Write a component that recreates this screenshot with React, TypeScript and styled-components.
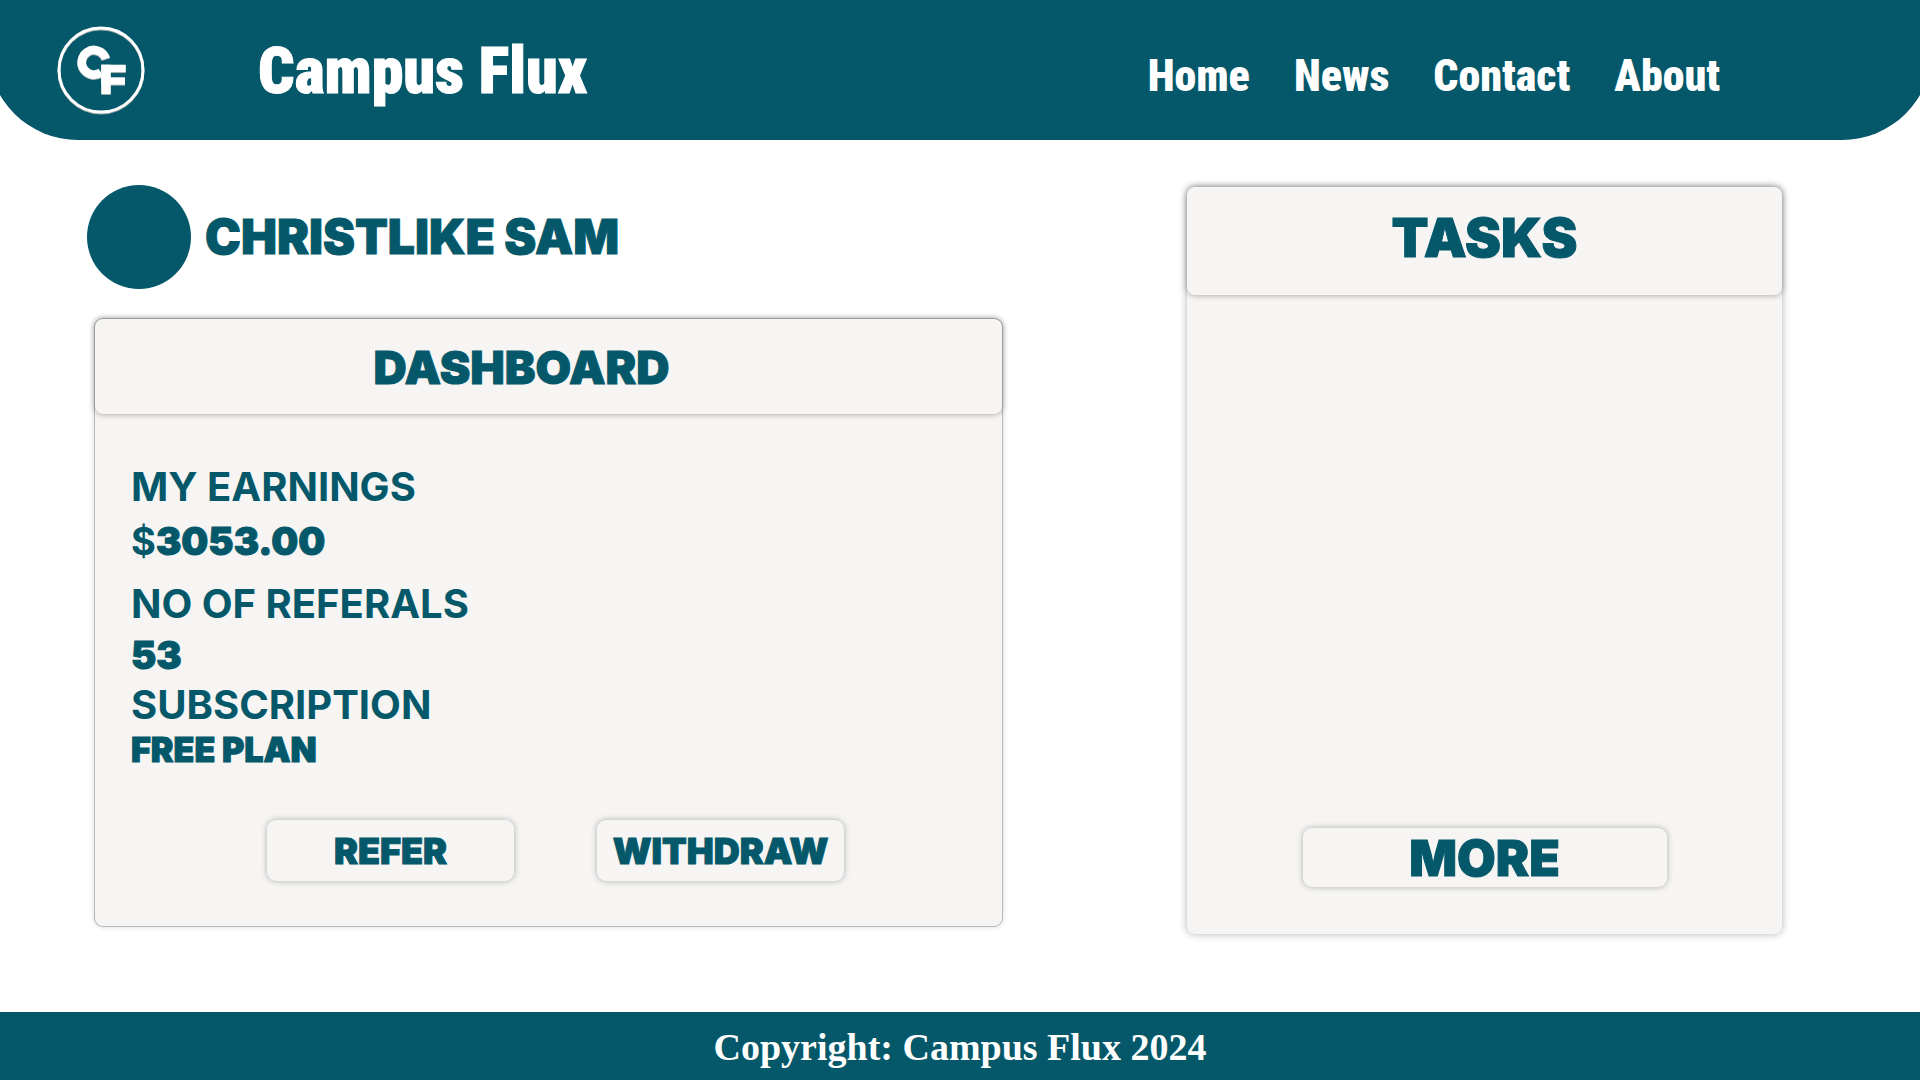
import React from "react";
import styled, { createGlobalStyle } from "styled-components";

const teal = "#045869";
const panel = "#f6f5f4";
const display = `Inter, "Open Sans", sans-serif`;
const condensed = `"Roboto Condensed", "Liberation Sans Narrow", Roboto, sans-serif`;

const GlobalStyle = createGlobalStyle`
  * { box-sizing: border-box; }
  body {
    margin: 0;
    background: #fff;
    color: ${teal};
    font-family: ${display};
    overflow-x: hidden;
  }
  h1, h2, dl, dd, p { margin: 0; }
`;

const Page = styled.div`
  min-height: 100vh;
  display: flex;
  flex-direction: column;
`;

const Header = styled.header`
  display: flex;
  align-items: center;
  height: 140px;
  margin: 0 -12px;
  padding: 0 212px 0 68px;
  background: ${teal};
  color: #fff;
  border-radius: 0 0 90px 90px;
  font-family: ${condensed};
  font-weight: 900;
`;

const Logo = styled.svg`
  width: 90px;
  height: 90px;
  flex: none;
  filter: drop-shadow(0 1px 0 #9aa8a6);
`;

const Brand = styled.a`
  margin-left: 112px;
  padding-top: 4px;
  font-size: 64px;
  line-height: 76px;
  color: inherit;
  text-decoration: none;
  -webkit-text-stroke: 1px currentColor;
`;

const Nav = styled.nav`
  display: flex;
  gap: 44px;
  margin-left: auto;
  padding-top: 12px;
`;

const NavLink = styled.a`
  font-size: 44px;
  line-height: 52px;
  color: inherit;
  text-decoration: none;
`;

const Main = styled.main`
  flex: 1;
  display: grid;
  grid-template-columns: minmax(0, 915fr) minmax(0, 595fr);
  gap: 185px;
  align-items: start;
  padding: 45px 138px 78px 87px;
`;

const Profile = styled.div`
  display: flex;
  align-items: center;
  gap: 14px;
  margin-bottom: 30px;
`;

const Avatar = styled.div`
  width: 104px;
  height: 104px;
  border-radius: 50%;
  background: ${teal};
`;

const Name = styled.h1`
  font-size: 48px;
  line-height: 52px;
  font-weight: 900;
  -webkit-text-stroke: 1px currentColor;
`;

const Card = styled.section<{ $outlined?: boolean }>`
  display: flex;
  flex-direction: column;
  background: ${panel};
  border-radius: 8px;
  ${(p) =>
    p.$outlined
      ? "margin-left: 8px; box-shadow: 0 0 0 1px #b9b9b9, 0 0 6px rgba(0, 0, 0, 0.2);"
      : "margin-top: 2px; box-shadow: 0 0 8px rgba(0, 0, 0, 0.3);"}
`;

const CardHead = styled.div<{ $tall?: boolean }>`
  display: flex;
  align-items: center;
  justify-content: center;
  height: ${(p) => (p.$tall ? 108 : 95)}px;
  padding: ${(p) => (p.$tall ? "0 0 6px" : "0 54px 0 0")};
  border-radius: 8px;
  box-shadow: 0 0 6px rgba(0, 0, 0, 0.38);
`;

const Title = styled.h2<{ $large?: boolean }>`
  font-size: ${(p) => (p.$large ? 54 : 46)}px;
  line-height: 60px;
  font-weight: 900;
  -webkit-text-stroke: 1px currentColor;
`;

const Stats = styled.dl`
  padding: 48px 36px 0;
`;

const Stat = styled.div<{ $spaced?: boolean }>`
  display: flex;
  flex-direction: column;
  gap: ${(p) => (p.$spaced ? 4 : 1)}px;
  padding-bottom: ${(p) => (p.$spaced ? 13 : 0)}px;
`;

const Label = styled.dt`
  font-size: 40px;
  line-height: 50px;
  font-weight: 700;
`;

const Value = styled.dd<{ $small?: boolean }>`
  font-size: ${(p) => (p.$small ? 34 : 38)}px;
  line-height: ${(p) => (p.$small ? 38 : 50)}px;
  font-weight: 900;
  -webkit-text-stroke: 1px currentColor;
`;

const Sign = styled.span`
  font-weight: 700;
  -webkit-text-stroke: 0;
`;

const Actions = styled.div`
  display: flex;
  justify-content: center;
  gap: 83px;
  padding: 51px 0 45px 14px;
`;

const Button = styled.button<{ $wide?: boolean }>`
  width: ${(p) => (p.$wide ? 364 : 247)}px;
  height: ${(p) => (p.$wide ? 59 : 61)}px;
  padding: 0;
  border: 0;
  border-radius: 9px;
  background: ${panel};
  box-shadow: 0 0 6px rgba(0, 0, 0, 0.3);
  color: ${teal};
  font: 900 ${(p) => (p.$wide ? 50 : 36)}px ${display};
  -webkit-text-stroke: 1px currentColor;
`;

const TaskArea = styled.div`
  height: 533px;
`;

const TaskFoot = styled.div`
  display: flex;
  justify-content: center;
  padding-bottom: 47px;
`;

const Footer = styled.footer`
  padding: 11px 0 9px;
  background: ${teal};
  color: #fff;
  text-align: center;
  font: 700 38px/48px "Palatino Linotype", Palatino, "Liberation Serif", serif;
`;

export default function App() {
  return (
    <Page>
      <GlobalStyle />
      <Header>
        <Logo viewBox="0 0 90 90" role="img" aria-label="Campus Flux logo">
          <g fill="none" stroke="#fff">
            <circle cx="45" cy="45" r="42" strokeWidth="3" />
            <circle cx="38" cy="37.3" r="12.3" strokeWidth="8.7" strokeDasharray="61.6 100" transform="rotate(55 38 37.3)" />
          </g>
          <g fill="#fff">
            <rect x="45.3" y="39.7" width="9.4" height="29.3" />
            <rect x="45.3" y="39.7" width="24.4" height="7.4" />
            <rect x="45.3" y="52.3" width="23.7" height="7.4" />
          </g>
        </Logo>
        <Brand href="#">Campus Flux</Brand>
        <Nav>
          {["Home", "News", "Contact", "About"].map((item) => (
            <NavLink key={item} href={`#${item.toLowerCase()}`}>{item}</NavLink>
          ))}
        </Nav>
      </Header>
      <Main>
        <div>
          <Profile>
            <Avatar />
            <Name>CHRISTLIKE SAM</Name>
          </Profile>
          <Card $outlined>
            <CardHead><Title>DASHBOARD</Title></CardHead>
            <Stats>
              <Stat $spaced>
                <Label>MY EARNINGS</Label>
                <Value><Sign>$</Sign>3053.00</Value>
              </Stat>
              <Stat>
                <Label>NO OF REFERALS</Label>
                <Value>53</Value>
              </Stat>
              <Stat>
                <Label>SUBSCRIPTION</Label>
                <Value $small>FREE PLAN</Value>
              </Stat>
            </Stats>
            <Actions>
              <Button type="button">REFER</Button>
              <Button type="button">WITHDRAW</Button>
            </Actions>
          </Card>
        </div>
        <Card>
          <CardHead $tall><Title $large>TASKS</Title></CardHead>
          <TaskArea />
          <TaskFoot><Button type="button" $wide>MORE</Button></TaskFoot>
        </Card>
      </Main>
      <Footer><p>Copyright: Campus Flux 2024</p></Footer>
    </Page>
  );
}
